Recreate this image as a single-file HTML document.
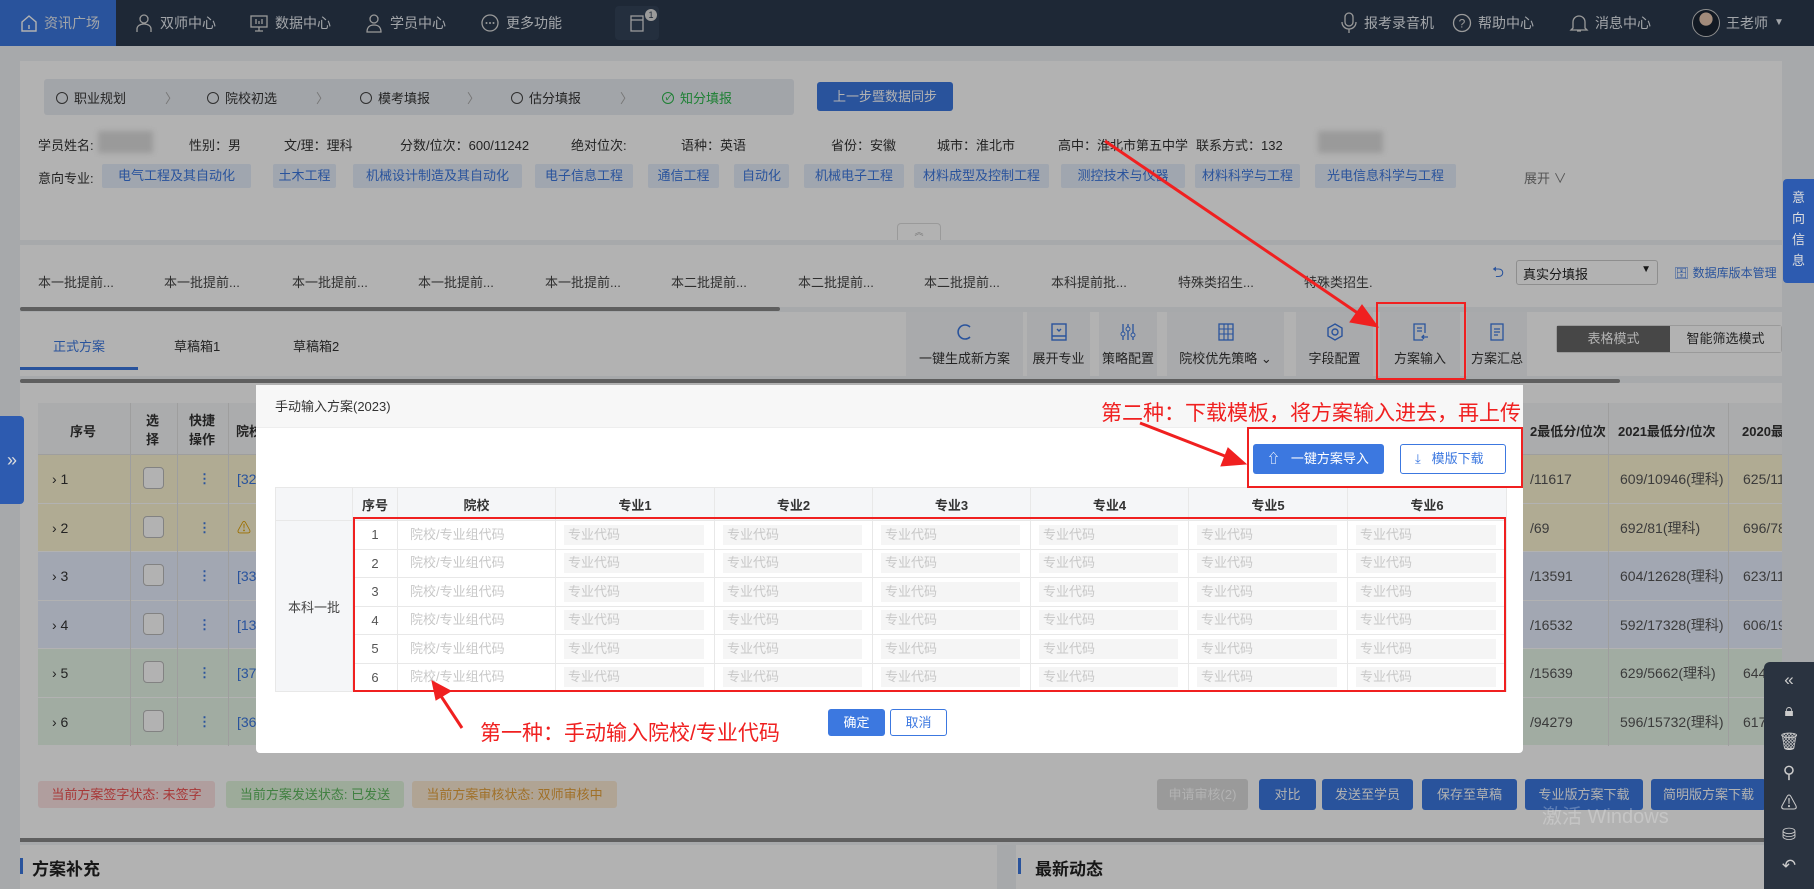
<!DOCTYPE html>
<html><head><meta charset="utf-8">
<style>
*{box-sizing:border-box;margin:0;padding:0}
body{width:1814px;height:889px;overflow:hidden;position:relative;background:#f0f2f5;font-family:"Liberation Sans","Noto Sans CJK SC",sans-serif;font-size:13px;color:#333}
.a{position:absolute}
.nav{left:0;top:0;width:1814px;height:46px;background:#2b3a4e;color:#e8ecf2;font-size:14px}
.nav .it{position:absolute;top:0;height:46px;line-height:46px;display:flex;align-items:center;gap:6px}
.card{background:#fff}
.tag{position:absolute;top:164px;height:24px;line-height:24px;background:#e6eefb;color:#3c78e0;font-size:13px;text-align:center;border-radius:2px}
.info{position:absolute;top:135px;font-size:13px;color:#333}
.step{position:absolute;top:88px;font-size:13px;color:#333;display:flex;align-items:center;gap:6px}
.step i{display:inline-block;width:12px;height:12px;border:1.3px solid #444;border-radius:50%}
.chev{position:absolute;top:88px;color:#aaa;font-size:13px}
.bt{position:absolute;top:272px;font-size:13px;color:#444}
.tb{position:absolute;top:312px;height:64px;background:#f3f4f6;text-align:center;font-size:13px;color:#333}
.tb svg{display:block;margin:10px auto 6px}
.row{position:absolute;left:38px;width:1744px;height:48.5px;border-bottom:1px solid #fff}
.overlay{left:0;top:0;width:1814px;height:889px;background:rgba(0,0,0,0.3)}
.modal{left:256px;top:385px;width:1267px;height:368px;background:#fff;border-radius:4px;z-index:20}
.mt{position:absolute;left:0;top:0;width:100%;height:43px;background:#f7f7f7;border-bottom:1px solid #eee;line-height:43px;padding-left:19px;font-size:13px;color:#333}
table.g{position:absolute;left:19px;top:102px;border-collapse:collapse;font-size:13px}
table.g td,table.g th{border:1px solid #e8e8e8;text-align:center}
table.g th{background:#f5f6f8;height:33px;font-weight:bold;color:#333}
table.g td{height:28.5px;color:#555}
.inp{height:20px;background:#f5f5f5;margin:0 10px 0 8px;text-align:left;color:#c8c8c8;line-height:20px;padding-left:4px}
.red{position:absolute;border:2.5px solid #f02020;z-index:30}
.note{position:absolute;color:#f02020;z-index:30;font-size:21px}
.bb{position:absolute;top:779px;height:31px;line-height:31px;color:#fff;background:#3c78e0;border-radius:3px;text-align:center;font-size:13px}
</style></head><body>

<!-- NAV -->
<div class="a nav">
  <div class="it" style="left:0;width:116px;background:#3c78e0;padding-left:20px"><svg width="18" height="18" viewBox="0 0 18 18"><path d="M2 8L9 2l7 6v9H2z" fill="none" stroke="#fff" stroke-width="1.4"/><path d="M9 11v4" stroke="#fff" stroke-width="1.4"/></svg>资讯广场</div>
  <div class="it" style="left:134px"><svg width="20" height="20" viewBox="0 0 20 20"><circle cx="10" cy="6" r="4" fill="none" stroke="#ddd" stroke-width="1.3"/><path d="M3 19v-3c0-3 3-5 7-5s7 2 7 5v3" fill="none" stroke="#ddd" stroke-width="1.3"/></svg>双师中心</div>
  <div class="it" style="left:249px"><svg width="20" height="20" viewBox="0 0 20 20"><rect x="2" y="3" width="16" height="11" fill="none" stroke="#ddd" stroke-width="1.3"/><path d="M10 14v4M6 18h8M7 6v5M10 8v3M13 6v5" stroke="#ddd" stroke-width="1.3"/></svg>数据中心</div>
  <div class="it" style="left:364px"><svg width="20" height="20" viewBox="0 0 20 20"><circle cx="10" cy="6" r="4" fill="none" stroke="#ddd" stroke-width="1.3"/><path d="M3 19c0-5 3-7 7-7s7 2 7 7z" fill="none" stroke="#ddd" stroke-width="1.3"/></svg>学员中心</div>
  <div class="it" style="left:480px"><svg width="20" height="20" viewBox="0 0 20 20"><circle cx="10" cy="10" r="8" fill="none" stroke="#ddd" stroke-width="1.3"/><circle cx="6.5" cy="10" r="1" fill="#ddd"/><circle cx="10" cy="10" r="1" fill="#ddd"/><circle cx="13.5" cy="10" r="1" fill="#ddd"/></svg>更多功能</div>
  <div class="it" style="left:615px;width:44px;justify-content:center;background:#34445a;top:6px;height:34px;border-radius:4px"><svg width="16" height="18" viewBox="0 0 16 18"><rect x="2" y="2" width="12" height="15" fill="none" stroke="#ddd" stroke-width="1.3"/><path d="M2 6h12" stroke="#ddd" stroke-width="1.3"/></svg></div>
  <div class="a" style="left:645px;top:9px;width:12px;height:12px;border-radius:50%;background:#ddd;color:#2b3a4e;font-size:9px;line-height:12px;text-align:center">1</div>
  <div class="it" style="left:1340px"><svg width="18" height="22" viewBox="0 0 18 22"><rect x="5" y="1" width="8" height="13" rx="4" fill="none" stroke="#ddd" stroke-width="1.3"/><path d="M2 10c0 4 3 7 7 7s7-3 7-7M9 17v4" fill="none" stroke="#ddd" stroke-width="1.3"/></svg>报考录音机</div>
  <div class="it" style="left:1452px"><svg width="20" height="20" viewBox="0 0 20 20"><circle cx="10" cy="10" r="8.5" fill="none" stroke="#ddd" stroke-width="1.3"/><text x="10" y="14.5" font-size="12" text-anchor="middle" fill="#ddd">?</text></svg>帮助中心</div>
  <div class="it" style="left:1569px"><svg width="20" height="20" viewBox="0 0 20 20"><path d="M4 15V9a6 6 0 0112 0v6l2 2H2z M8 18h4" fill="none" stroke="#ddd" stroke-width="1.3"/></svg>消息中心</div>
  <div class="it" style="left:1692px"><span style="width:28px;height:28px;border-radius:50%;background:radial-gradient(circle at 50% 35%,#e8c8b0 30%,#1b2433 32%);display:inline-block;border:1px solid #ccc"></span>王老师 <span style="font-size:10px">▼</span></div>
</div>

<!-- TOP CARD -->
<div class="a card" style="left:20px;top:61px;width:1762px;height:179px"></div>
<div class="a" style="left:44px;top:79px;width:750px;height:36px;background:#e9ecf2;border-radius:3px"></div>
<div class="step" style="left:56px"><i></i>职业规划</div><span class="chev" style="left:165px">〉</span>
<div class="step" style="left:207px"><i></i>院校初选</div><span class="chev" style="left:316px">〉</span>
<div class="step" style="left:360px"><i></i>模考填报</div><span class="chev" style="left:467px">〉</span>
<div class="step" style="left:511px"><i></i>估分填报</div><span class="chev" style="left:620px">〉</span>
<div class="step" style="left:662px;color:#2ab84a"><i style="border-color:#2ab84a;position:relative"><b style="position:absolute;left:2px;top:-1px;font-size:8px;color:#2ab84a">✓</b></i>知分填报</div>
<div class="a" style="left:817px;top:82px;width:136px;height:29px;background:#3c78e0;color:#fff;border-radius:3px;text-align:center;line-height:29px">上一步暨数据同步</div>

<div class="info" style="left:38px">学员姓名:</div><div class="a" style="left:98px;top:131px;width:55px;height:22px;background:#ddd;filter:blur(3px)"></div>
<div class="info" style="left:189px">性别：男</div>
<div class="info" style="left:284px">文/理：理科</div>
<div class="info" style="left:400px">分数/位次：600/11242</div>
<div class="info" style="left:571px">绝对位次:</div>
<div class="info" style="left:681px">语种：英语</div>
<div class="info" style="left:831px">省份：安徽</div>
<div class="info" style="left:937px">城市：淮北市</div>
<div class="info" style="left:1058px">高中：淮北市第五中学</div>
<div class="info" style="left:1196px">联系方式：132</div><div class="a" style="left:1318px;top:131px;width:65px;height:22px;background:#ddd;filter:blur(3px)"></div>

<div class="info" style="left:38px;top:168px">意向专业:</div>
<div class="tag" style="left:102px;width:149px">电气工程及其自动化</div>
<div class="tag" style="left:273px;width:63px">土木工程</div>
<div class="tag" style="left:353px;width:169px">机械设计制造及其自动化</div>
<div class="tag" style="left:535px;width:98px">电子信息工程</div>
<div class="tag" style="left:648px;width:71px">通信工程</div>
<div class="tag" style="left:734px;width:55px">自动化</div>
<div class="tag" style="left:804px;width:100px">机械电子工程</div>
<div class="tag" style="left:914px;width:135px">材料成型及控制工程</div>
<div class="tag" style="left:1061px;width:124px">测控技术与仪器</div>
<div class="tag" style="left:1195px;width:105px">材料科学与工程</div>
<div class="tag" style="left:1315px;width:141px">光电信息科学与工程</div>
<div class="info" style="left:1524px;top:168px;color:#777">展开 ∨</div>
<div class="a" style="left:897px;top:223px;width:44px;height:17px;border:1px solid #ddd;border-bottom:none;border-radius:4px 4px 0 0;background:#fff;font-size:9px;color:#aaa;text-align:center;line-height:16px">︽</div>

<!-- BATCH TABS -->
<div class="a card" style="left:20px;top:245px;width:1762px;height:62px"></div>
<div class="bt" style="left:38px">本一批提前...</div>
<div class="bt" style="left:164px">本一批提前...</div>
<div class="bt" style="left:292px">本一批提前...</div>
<div class="bt" style="left:418px">本一批提前...</div>
<div class="bt" style="left:545px">本一批提前...</div>
<div class="bt" style="left:671px">本二批提前...</div>
<div class="bt" style="left:798px">本二批提前...</div>
<div class="bt" style="left:924px">本二批提前...</div>
<div class="bt" style="left:1051px">本科提前批...</div>
<div class="bt" style="left:1178px">特殊类招生...</div>
<div class="bt" style="left:1304px">特殊类招生.</div>
<div class="a" style="left:1492px;top:262px;color:#3c78e0;font-size:15px">⮌</div>
<div class="a" style="left:1516px;top:260px;width:142px;height:25px;border:1px solid #ccc;border-radius:3px;background:#fff;padding:3px 6px;font-size:13px;color:#222">真实分填报<span style="position:absolute;right:6px;font-size:10px">▼</span></div>
<div class="a" style="left:1674px;top:264px;color:#3c78e0;font-size:12px">🗄 数据库版本管理</div>
<div class="a" style="left:20px;top:307px;width:760px;height:4px;background:#888;border-radius:2px"></div>

<!-- TOOLBAR CARD -->
<div class="a card" style="left:20px;top:312px;width:1762px;height:64px"></div>
<div class="a" style="left:53px;top:336px;color:#3c78e0;font-size:13px">正式方案</div>
<div class="a" style="left:20px;top:367px;width:118px;height:3px;background:#3c78e0"></div>
<div class="a" style="left:174px;top:336px;font-size:13px">草稿箱1</div>
<div class="a" style="left:293px;top:336px;font-size:13px">草稿箱2</div>
<div class="tb" style="left:906px;width:117px"><svg width="20" height="20" viewBox="0 0 20 20"><path d="M15 5A7 7 0 1015 15" fill="none" stroke="#3c78e0" stroke-width="1.6"/></svg>一键生成新方案</div>
<div class="tb" style="left:1027px;width:63px"><svg width="20" height="20" viewBox="0 0 20 20"><rect x="3" y="2" width="14" height="16" fill="none" stroke="#3c78e0" stroke-width="1.4"/><path d="M3 14h14M8 7l2 2 2-2" fill="none" stroke="#3c78e0" stroke-width="1.4"/></svg>展开专业</div>
<div class="tb" style="left:1099px;width:58px"><svg width="20" height="20" viewBox="0 0 20 20"><path d="M5 2v16M10 2v16M15 2v16" stroke="#3c78e0" stroke-width="1.3"/><circle cx="5" cy="12" r="2" fill="#fff" stroke="#3c78e0"/><circle cx="10" cy="7" r="2" fill="#fff" stroke="#3c78e0"/><circle cx="15" cy="13" r="2" fill="#fff" stroke="#3c78e0"/></svg>策略配置</div>
<div class="tb" style="left:1167px;width:117px"><svg width="20" height="20" viewBox="0 0 20 20"><rect x="3" y="2" width="14" height="16" fill="none" stroke="#3c78e0" stroke-width="1.3"/><path d="M3 7h14M3 12h14M8 2v16M12 2v16" stroke="#3c78e0" stroke-width="1.1"/></svg>院校优先策略 ⌄</div>
<div class="tb" style="left:1296px;width:77px"><svg width="20" height="20" viewBox="0 0 20 20"><path d="M10 2l7 4v8l-7 4-7-4V6z" fill="none" stroke="#3c78e0" stroke-width="1.4"/><circle cx="10" cy="10" r="3" fill="none" stroke="#3c78e0" stroke-width="1.4"/></svg>字段配置</div>
<div class="tb" style="left:1380px;width:80px"><svg width="20" height="20" viewBox="0 0 20 20"><path d="M13 18H4V2h11v9" fill="none" stroke="#3c78e0" stroke-width="1.3"/><path d="M7 6h5M7 9h5M18 15h-6M14 13l-2 2 2 2" fill="none" stroke="#3c78e0" stroke-width="1.3"/></svg>方案输入</div>
<div class="tb" style="left:1467px;width:60px"><svg width="20" height="20" viewBox="0 0 20 20"><rect x="4" y="2" width="12" height="16" fill="none" stroke="#3c78e0" stroke-width="1.3"/><path d="M7 7h6M7 10h6M7 13h4" stroke="#3c78e0" stroke-width="1.3"/></svg>方案汇总</div>
<div class="a" style="left:1556px;top:325px;width:226px;height:28px;border:1px solid #ddd;border-radius:3px;display:flex;font-size:13px;line-height:26px;text-align:center"><div style="width:113px;background:#666;color:#fff">表格模式</div><div style="flex:1;color:#333;background:#fff">智能筛选模式</div></div>
<div class="a" style="left:20px;top:379px;width:1600px;height:4px;background:#888;border-radius:2px"></div>

<!-- MAIN TABLE -->
<div class="a card" style="left:20px;top:383px;width:1762px;height:455px"></div>
<div class="a" style="left:38px;top:403px;width:1744px;height:52px;background:#f5f6f8;border-bottom:1px solid #e3e3e3"></div>
<div class="a" style="left:70px;top:421px;font-weight:bold">序号</div>
<div class="a" style="left:146px;top:411px;font-weight:bold;line-height:19px">选<br>择</div>
<div class="a" style="left:189px;top:411px;font-weight:bold;line-height:19px">快捷<br>操作</div>
<div class="a" style="left:236px;top:421px;font-weight:bold">院校</div>
<div class="a" style="left:1530px;top:421px;font-weight:bold">2最低分/位次</div>
<div class="a" style="left:1618px;top:421px;font-weight:bold">2021最低分/位次</div>
<div class="a" style="left:1742px;top:421px;font-weight:bold;width:40px;overflow:hidden;white-space:nowrap">2020最低</div>
<div class="row" style="top:455px;background:#fdf5d3"></div>
<div class="row" style="top:503.5px;background:#fdf5d3"></div>
<div class="row" style="top:552px;background:#e8efff"></div>
<div class="row" style="top:600.5px;background:#e8efff"></div>
<div class="row" style="top:649px;background:#e7f6e9"></div>
<div class="row" style="top:697.5px;background:#e7f6e9"></div>
<div class="a" style="left:130px;top:403px;width:1px;height:343px;background:#e3e3e3"></div>
<div class="a" style="left:177px;top:403px;width:1px;height:343px;background:#e3e3e3"></div>
<div class="a" style="left:228px;top:403px;width:1px;height:343px;background:#e3e3e3"></div>
<div class="a" style="left:1608px;top:403px;width:1px;height:343px;background:#e3e3e3"></div>
<div class="a" style="left:1728px;top:403px;width:1px;height:343px;background:#e3e3e3"></div>
<!-- row contents -->
<div class="a" style="left:52px;top:470px;line-height:48.5px;font-size:14px">
</div>
<div class="a" style="left:52px;top:455px;font-size:14px;line-height:48.5px">›&nbsp;1<br>›&nbsp;2<br>›&nbsp;3<br>›&nbsp;4<br>›&nbsp;5<br>›&nbsp;6</div>
<div class="a" style="left:143px;top:467px;display:flex;flex-direction:column;gap:26.5px"><i style="width:21px;height:22px;border:1px solid #bbb;border-radius:4px;background:#fff;display:block"></i><i style="width:21px;height:22px;border:1px solid #bbb;border-radius:4px;background:#fff;display:block"></i><i style="width:21px;height:22px;border:1px solid #bbb;border-radius:4px;background:#fff;display:block"></i><i style="width:21px;height:22px;border:1px solid #bbb;border-radius:4px;background:#fff;display:block"></i><i style="width:21px;height:22px;border:1px solid #bbb;border-radius:4px;background:#fff;display:block"></i><i style="width:21px;height:22px;border:1px solid #bbb;border-radius:4px;background:#fff;display:block"></i></div>
<div class="a" style="left:198px;top:455px;color:#3c78e0;line-height:48.5px;font-weight:bold">⋮<br>⋮<br>⋮<br>⋮<br>⋮<br>⋮</div>
<div class="a" style="left:237px;top:455px;color:#3c78e0;line-height:48.5px;font-size:14px">[32<br><span style="color:#e0a000">⚠</span><br>[33<br>[13<br>[37<br>[36</div>
<div class="a" style="left:1530px;top:455px;line-height:48.5px;font-size:14px;color:#555">/11617<br>/69<br>/13591<br>/16532<br>/15639<br>/94279</div>
<div class="a" style="left:1620px;top:455px;line-height:48.5px;font-size:14px;color:#555">609/10946(理科)<br>692/81(理科)<br>604/12628(理科)<br>592/17328(理科)<br>629/5662(理科)<br>596/15732(理科)</div>
<div class="a" style="left:1743px;top:455px;line-height:48.5px;font-size:14px;color:#555;width:39px;overflow:hidden;white-space:nowrap">625/1111<br>696/78(理<br>623/1185<br>606/1912<br>644<br>617</div>

<div class="a" style="left:38px;top:781px;width:177px;height:27px;background:#fde2e2;color:#f05050;line-height:27px;text-align:center;border-radius:3px">当前方案签字状态: 未签字</div>
<div class="a" style="left:226px;top:781px;width:178px;height:27px;background:#e1f5dd;color:#5cb85c;line-height:27px;text-align:center;border-radius:3px">当前方案发送状态: 已发送</div>
<div class="a" style="left:412px;top:781px;width:205px;height:27px;background:#fcebd5;color:#e6a23c;line-height:27px;text-align:center;border-radius:3px">当前方案审核状态: 双师审核中</div>
<div class="bb" style="left:1157px;width:91px;background:#ddd;color:#fff">申请审核(2)</div>
<div class="bb" style="left:1259px;width:57px">对比</div>
<div class="bb" style="left:1322px;width:91px">发送至学员</div>
<div class="bb" style="left:1422px;width:95px">保存至草稿</div>
<div class="bb" style="left:1525px;width:118px">专业版方案下载</div>
<div class="bb" style="left:1651px;width:115px">简明版方案下载</div>
<div class="a" style="left:20px;top:838px;width:1762px;height:4px;background:#888"></div>

<div class="a card" style="left:20px;top:845px;width:977px;height:44px"></div>
<div class="a card" style="left:1016px;top:845px;width:766px;height:44px"></div>
<div class="a" style="left:20px;top:858px;width:3px;height:16px;background:#3c78e0"></div>
<div class="a" style="left:32px;top:855px;font-size:17px;font-weight:bold;color:#222">方案补充</div>
<div class="a" style="left:1018px;top:858px;width:3px;height:16px;background:#3c78e0"></div>
<div class="a" style="left:1035px;top:855px;font-size:17px;font-weight:bold;color:#222">最新动态</div>

<!-- OVERLAY -->
<div class="a overlay" style="z-index:10"></div>

<!-- side tabs -->
<div class="a" style="left:1783px;top:179px;width:31px;height:104px;background:#2d5bb0;color:#ddd;border-radius:4px 0 0 4px;z-index:11;font-size:13px;text-align:center;line-height:21px;padding-top:8px">意<br>向<br>信<br>息</div>
<div class="a" style="left:0;top:416px;width:24px;height:88px;background:#2d5bb0;border-radius:0 4px 4px 0;z-index:11;color:#ddd;font-size:18px;line-height:88px;text-align:center">»</div>
<div class="a" style="left:1764px;top:662px;width:50px;height:227px;background:#2a3340;border-radius:6px 0 0 0;z-index:11;color:#ccc;text-align:center;font-size:17px;line-height:31px;padding-top:2px">«<br>🔒︎<br>🗑︎<br>⚲<br>⚠︎<br>⛁<br>↶</div>
<div class="a" style="left:1542px;top:800px;z-index:11;color:rgba(255,255,255,0.25);font-size:20px">激活 Windows</div>

<!-- MODAL -->
<div class="a modal">
  <div class="mt">手动输入方案(2023)</div>
  <div class="a" style="left:997px;top:59px;width:131px;height:30px;background:#3c78e0;color:#fff;border-radius:3px;line-height:30px;font-size:13px;padding-left:14px">⇧&nbsp;&nbsp;&nbsp;一键方案导入</div>
  <div class="a" style="left:1144px;top:59px;width:106px;height:30px;border:1px solid #3c78e0;color:#3c78e0;border-radius:3px;line-height:28px;font-size:13px;padding-left:14px">⤓&nbsp;&nbsp;&nbsp;模版下载</div>
  <table class="g">
    <tr><th style="width:77px;background:#f5f6f8"></th><th style="width:45px">序号</th><th style="width:158px">院校</th><th style="width:159px">专业1</th><th style="width:158px">专业2</th><th style="width:158px">专业3</th><th style="width:158px">专业4</th><th style="width:159px">专业5</th><th style="width:159px">专业6</th></tr>
    <tr><td rowspan="6" style="background:#f5f6f8;color:#444">本科一批</td><td>1</td><td><div class="inp" style="background:none">院校/专业组代码</div></td><td><div class="inp">专业代码</div></td><td><div class="inp">专业代码</div></td><td><div class="inp">专业代码</div></td><td><div class="inp">专业代码</div></td><td><div class="inp">专业代码</div></td><td><div class="inp">专业代码</div></td></tr>
    <tr><td>2</td><td><div class="inp" style="background:none">院校/专业组代码</div></td><td><div class="inp">专业代码</div></td><td><div class="inp">专业代码</div></td><td><div class="inp">专业代码</div></td><td><div class="inp">专业代码</div></td><td><div class="inp">专业代码</div></td><td><div class="inp">专业代码</div></td></tr>
    <tr><td>3</td><td><div class="inp" style="background:none">院校/专业组代码</div></td><td><div class="inp">专业代码</div></td><td><div class="inp">专业代码</div></td><td><div class="inp">专业代码</div></td><td><div class="inp">专业代码</div></td><td><div class="inp">专业代码</div></td><td><div class="inp">专业代码</div></td></tr>
    <tr><td>4</td><td><div class="inp" style="background:none">院校/专业组代码</div></td><td><div class="inp">专业代码</div></td><td><div class="inp">专业代码</div></td><td><div class="inp">专业代码</div></td><td><div class="inp">专业代码</div></td><td><div class="inp">专业代码</div></td><td><div class="inp">专业代码</div></td></tr>
    <tr><td>5</td><td><div class="inp" style="background:none">院校/专业组代码</div></td><td><div class="inp">专业代码</div></td><td><div class="inp">专业代码</div></td><td><div class="inp">专业代码</div></td><td><div class="inp">专业代码</div></td><td><div class="inp">专业代码</div></td><td><div class="inp">专业代码</div></td></tr>
    <tr><td>6</td><td><div class="inp" style="background:none">院校/专业组代码</div></td><td><div class="inp">专业代码</div></td><td><div class="inp">专业代码</div></td><td><div class="inp">专业代码</div></td><td><div class="inp">专业代码</div></td><td><div class="inp">专业代码</div></td><td><div class="inp">专业代码</div></td></tr>
  </table>
  <div class="a" style="left:572px;top:324px;width:57px;height:27px;background:#3c78e0;color:#fff;border-radius:3px;line-height:27px;text-align:center">确定</div>
  <div class="a" style="left:634px;top:324px;width:57px;height:27px;border:1px solid #3c78e0;color:#3c78e0;border-radius:3px;line-height:25px;text-align:center">取消</div>
</div>

<!-- ANNOTATIONS -->
<div class="red" style="left:1376px;top:302px;width:90px;height:78px"></div>
<div class="red" style="left:1247px;top:427px;width:276px;height:61px"></div>
<div class="red" style="left:353px;top:517px;width:1153px;height:175px"></div>
<div class="note" style="left:1101px;top:397px">第二种：下载模板，将方案输入进去，再上传</div>
<div class="note" style="left:480px;top:717px">第一种：手动输入院校/专业代码</div>
<svg class="a" style="left:0;top:0;z-index:30" width="1814" height="889">
  <g fill="#f02020" stroke="#f02020">
    <line x1="1105" y1="141" x2="1362" y2="316" stroke-width="3"/>
    <polygon points="1378,327 1350,322 1362,305" />
    <line x1="1140" y1="423" x2="1230" y2="458" stroke-width="3"/>
    <polygon points="1246,464 1221,466 1228,448"/>
    <line x1="462" y1="728" x2="437" y2="690" stroke-width="3"/>
    <polygon points="432,681 451,691 436,700"/>
  </g>
</svg>
</body></html>
